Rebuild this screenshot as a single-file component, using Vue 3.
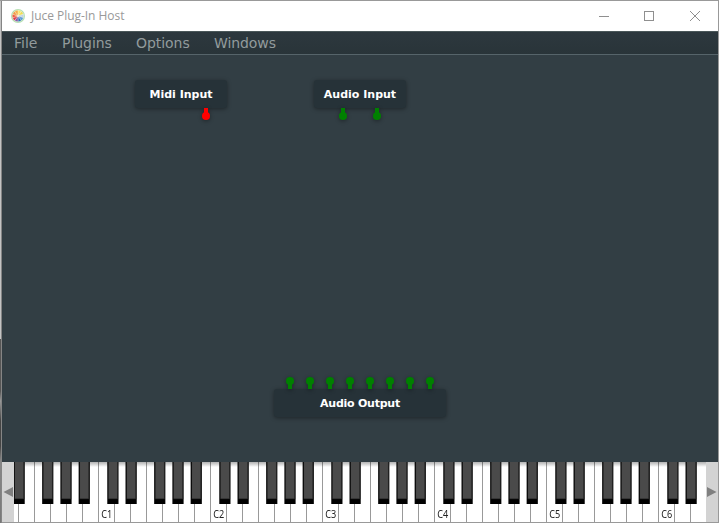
<script setup>
const menus = [
  { label: 'File', cls: 'm-file' },
  { label: 'Plugins', cls: 'm-plugins' },
  { label: 'Options', cls: 'm-options' },
  { label: 'Windows', cls: 'm-windows' },
]
const wheel = ['#fae66a', '#f4dc50', '#c3d3e2', '#5b9bd8', '#2c74b8', '#8a5aa8', '#e23a4c', '#ee5a3c', '#f49a48', '#f6b04c']
const sector = (i) => {
  const a = ((i * 36 - 90) * Math.PI) / 180
  const b = (((i + 1) * 36 - 90) * Math.PI) / 180
  const p = (t) => `${7 + 5.7 * Math.cos(t)} ${7 + 5.7 * Math.sin(t)}`
  return `M7 7 L${p(a)} A5.7 5.7 0 0 1 ${p(b)} Z`
}

const whiteKeys = [{ w: 5, label: '' }]
for (let i = 0; i < 43; i++) {
  const n = i - 5
  whiteKeys.push({ w: i === 42 ? 15 : 16, label: n >= 0 && n % 7 === 0 ? `C${n / 7 + 1}` : '' })
}
const blackKeys = []
for (let o = 0; o < 7; o++) {
  for (const d of [9.28, 27.52, 56.16, 74.4, 92.64]) {
    const x = -28 + o * 112 + d
    if (x > -1 && x < 685) blackKeys.push(x)
  }
}
</script>

<template>
  <div class="desktop">
    <div class="edge"></div>
    <div class="window">
      <header class="titlebar">
        <svg class="logo" width="14" height="14" viewBox="0 0 14 14">
          <circle cx="7" cy="7" r="7" fill="#b4dfb0" />
          <path v-for="(c, i) in wheel" :key="i" :d="sector(i)" :fill="c" stroke="#fff" stroke-width=".3" />
          <circle cx="7" cy="7" r="1" fill="#fbe9d0" />
        </svg>
        <span class="title">Juce Plug-In Host</span>
        <svg class="controls" width="105" height="12" viewBox="0 0 105 12" fill="none" stroke="#8f8f8f">
          <path d="M0 6.5h10" />
          <rect x="45.5" y="1.5" width="9" height="9" />
          <path d="M91 1l10 10M101 1l-10 10" />
        </svg>
      </header>
      <nav class="menubar">
        <span v-for="m in menus" :key="m.label" :class="['menu', m.cls]">{{ m.label }}</span>
      </nav>
      <main class="graph">
        <div class="node midi">
          <span>Midi Input</span>
          <i class="pin out red"></i>
        </div>
        <div class="node audio-in">
          <span>Audio Input</span>
          <i class="pin out p1"></i>
          <i class="pin out p2"></i>
        </div>
        <div class="node audio-out">
          <span>Audio Output</span>
          <div class="pins"><i v-for="n in 8" :key="n" class="pin in"></i></div>
        </div>
      </main>
      <footer class="keyboard">
        <div class="scroll">
          <svg width="12" height="60" viewBox="0 0 12 60"><path d="M1.5 30L11 25v10z" fill="#808080" /></svg>
        </div>
        <div class="keys">
          <div v-for="(k, i) in whiteKeys" :key="i" class="white" :style="{ width: k.w + 'px' }"><span>{{ k.label }}</span></div>
          <svg class="black" width="692" height="60" viewBox="0 0 692 60">
            <g v-for="x in blackKeys" :key="x">
              <rect :x="x" y="0" width="11.2" height="42" fill="#000" />
              <rect :x="x + 1" y="0" width="9.8" height="37.2" fill="#222" />
              <rect :x="x + 1.4" y="0" width="8.4" height="36.5" fill="#4a4a4a" />
            </g>
          </svg>
        </div>
        <div class="scroll">
          <svg width="12" height="60" viewBox="0 0 12 60"><path d="M10.5 30L1 25v10z" fill="#808080" /></svg>
        </div>
      </footer>
    </div>
  </div>
</template>

<style>
html, body { background: #999; overflow: hidden; }
</style>

<style scoped>
.desktop { width: 719px; height: 523px; display: flex; box-sizing: border-box; padding-top: 1px; background: #999; font-family: "DejaVu Sans", sans-serif; overflow: hidden; }
.edge { width: 2px; flex: none; background: linear-gradient(90deg, transparent 1px, #858585 1px), linear-gradient(#c4c4c4 0 338px, #555 338px 390px, #999 400px, #444 420px 445px, #888 460px, #777); }
.window { width: 716px; height: 521px; flex: none; display: flex; flex-direction: column; }
.titlebar { height: 30px; background: #fff; display: flex; align-items: center; box-sizing: border-box; padding: 0 14px 1px 9px; }
.title { font: 12px/16px "Open Sans", sans-serif; color: #999; margin-left: 6px; letter-spacing: -0.04px; padding-top: 1px; white-space: nowrap; }
.controls { margin-left: auto; }
.menubar { height: 24px; box-sizing: border-box; border-top: 1px solid #4a5759; border-bottom: 1px solid #56646a; background: linear-gradient(#2d383e, #293439); display: flex; padding-left: 12px; }
.menu { font-size: 14px; line-height: 23px; color: #929b9d; white-space: nowrap; }
.m-file { width: 48px; }
.m-plugins { width: 74px; letter-spacing: -0.05px; }
.m-options { width: 78px; letter-spacing: -0.05px; }
.m-windows { letter-spacing: -0.08px; }
.graph { height: 407px; position: relative; background: #323e44; }
.node { position: absolute; height: 28px; background: #263238; border-radius: 3px; box-shadow: 0 1px 4px rgba(0,0,0,.4); color: #fff; font-size: 11px; font-weight: bold; line-height: 29px; text-align: center; white-space: nowrap; }
.midi { left: 133px; top: 25px; width: 92px; }
.audio-in { left: 312px; top: 25px; width: 92px; }
.audio-out { left: 272px; top: 334px; width: 172px; letter-spacing: -0.25px; }
.pin { display: block; width: 8px; height: 12px; position: absolute; color: #008000; filter: drop-shadow(0 1px 2px rgba(0,0,0,.4)); }
.pin::before { content: ""; position: absolute; left: 2px; width: 4px; top: 0; height: 10px; background: currentColor; }
.pin::after { content: ""; position: absolute; left: 0; width: 8px; height: 8px; border-radius: 50%; background: currentColor; }
.out { top: 28px; }
.out::after { top: 4px; }
.red { color: #f00; left: 67px; }
.p1 { left: 25px; }
.p2 { left: 59px; }
.pins { position: absolute; left: 12px; top: -12px; display: flex; gap: 12px; }
.in { position: relative; }
.in::after { top: 0; }
.in::before { top: 2px; height: 10px; }
.keyboard { height: 60px; display: flex; }
.scroll { width: 12px; flex: none; background: #d3d3d3; }
.keys { width: 692px; height: 60px; flex: none; display: flex; position: relative; background: #fff; }
.keys::before { content: ""; position: absolute; inset: 0 0 auto; height: 5px; background: linear-gradient(rgba(0,0,0,.3), transparent); }
.white { height: 60px; flex: none; box-sizing: border-box; border-right: 1px solid #999; font: 11px/12px "Noto Sans", sans-serif; color: #222; padding-top: 46px; text-align: center; }
.white span { display: inline-block; transform: scaleX(.83); }
.white:nth-last-child(2) { border-right: 0; }
.black { position: absolute; left: 0; top: 0; }
</style>
